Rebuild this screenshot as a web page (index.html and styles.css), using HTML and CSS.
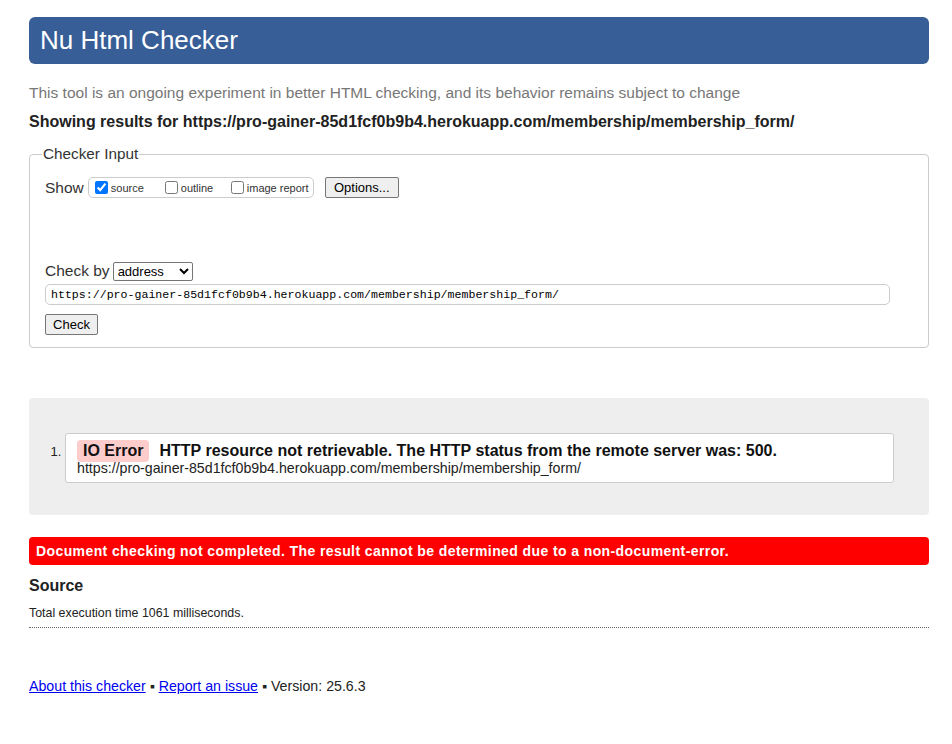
FILE: index.html
```html
<!DOCTYPE html>
<html lang="en">
<head>
<meta charset="utf-8">
<title>Nu Html Checker</title>
<link rel="stylesheet" href="styles.css">
</head>
<body>
<div class="page">
  <h1 class="title">Nu Html Checker</h1>
  <p class="intro">This tool is an ongoing experiment in better HTML checking, and its behavior remains subject to change</p>
  <p class="showing">Showing results for https://pro-gainer-85d1fcf0b9b4.herokuapp.com/membership/membership_form/</p>

  <fieldset class="input">
    <legend class="legend">Checker Input</legend>
    <div class="show-row">
      <span class="label">Show</span>
      <span class="opts">
        <label class="opt"><input type="checkbox" checked>source</label>
        <label class="opt"><input type="checkbox">outline</label>
        <label class="opt"><input type="checkbox">image report</label>
      </span>
      <button class="btn options">Options...</button>
    </div>
    <div class="checkby-row">
      <span class="label">Check by</span>
      <select class="select"><option>address</option></select>
    </div>
    <input class="url" type="text" value="https://pro-gainer-85d1fcf0b9b4.herokuapp.com/membership/membership_form/">
    <div class="check-row"><button class="btn check">Check</button></div>
  </fieldset>

  <div class="results">
    <ol class="list">
      <li class="item">
        <div class="msg-box">
          <p class="msg"><span class="badge">IO Error</span><span class="msg-text">HTTP resource not retrievable. The HTTP status from the remote server was: 500.</span></p>
          <p class="loc">https://pro-gainer-85d1fcf0b9b4.herokuapp.com/membership/membership_form/</p>
        </div>
      </li>
    </ol>
  </div>

  <p class="fatal">Document checking not completed. The result cannot be determined due to a non-document-error.</p>

  <h2 class="source">Source</h2>
  <p class="stats">Total execution time 1061 milliseconds.</p>

  <p class="footer"><a href="#">About this checker</a> &#9642; <a href="#">Report an issue</a> &#9642; Version: 25.6.3</p>
</div>
</body>
</html>
```
FILE: styles.css
```css
* { box-sizing: border-box; }
html, body { margin: 0; padding: 0; background: #fff; }
body {
  font-family: "Liberation Sans", Arial, sans-serif;
  color: #222;
}
.page {
  width: 900px;
  margin-left: 29px;
  padding-top: 17px;
}
.title {
  margin: 0;
  height: 47px;
  background: #375e97;
  color: #fff;
  border-radius: 6px;
  font-weight: normal;
  font-size: 26px;
  line-height: 47px;
  padding-left: 11px;
}
.intro {
  margin: 19px 0 0;
  font-size: 15.5px;
  line-height: 20px;
  color: #777;
}
.showing {
  margin: 9px 0 0;
  font-size: 16px;
  font-weight: bold;
  line-height: 20px;
  color: #222;
}
.input {
  margin: 13px 0 0;
  border: 1px solid #ccc;
  border-radius: 4px;
  padding: 8px 15px 12px 15px;
  min-width: 0;
}
.legend {
  font-size: 15.3px;
  padding: 0 1px;
  margin-left: -3px;
  color: #333;
}
.show-row {
  display: flex;
  align-items: center;
  height: 21px;
  margin-top: 6px;
}
.label {
  font-size: 15.5px;
  color: #333;
  margin-right: 4px;
  white-space: nowrap;
}
.opts {
  display: inline-flex;
  align-items: center;
  height: 21px;
  border: 1px solid #ccc;
  border-radius: 5px;
  padding: 0 0 0 6px;
  width: 226px;
}
.opt {
  display: inline-flex;
  align-items: center;
  font-size: 11px;
  color: #333;
  white-space: nowrap;
}
.opt input {
  margin: 0 3px 0 0;
  width: 13px;
  height: 13px;
  accent-color: #0075ff;
}
.opt:nth-child(1) { width: 70px; }
.opt:nth-child(2) { width: 66px; }
.btn {
  font-family: "Liberation Sans", Arial, sans-serif;
  font-size: 13px;
  background: #efefef;
  border: 1px solid #767676;
  border-radius: 2px;
  color: #000;
  height: 21px;
  padding: 0 7px;
}
.options { margin-left: 11px; width: 74px; }
.checkby-row {
  display: flex;
  align-items: center;
  margin-top: 63px;
  height: 20px;
}
.checkby-row .label { margin-right: 3px; }
.select {
  font-family: "Liberation Sans", Arial, sans-serif;
  font-size: 13px;
  width: 80px;
  height: 19px;
  border: 1px solid #767676;
  border-radius: 2px;
  background: #fff;
  color: #000;
}
.url {
  display: block;
  margin-top: 3px;
  width: 845px;
  height: 21px;
  border: 1px solid #ccc;
  border-radius: 5px;
  font-family: "Liberation Mono", monospace;
  font-size: 11.6px;
  padding: 0 5px;
  color: #000;
}
.check-row { margin-top: 9px; }
.check { width: 53px; height: 21px; }
.results {
  margin-top: 50px;
  background: #eee;
  border-radius: 4px;
  padding: 35px 35px 33px 0;
  height: 117px;
}
.list {
  margin: 0;
  padding-left: 36px;
  font-size: 13px;
  color: #222;
}
.msg-box {
  background: #fff;
  border: 1px solid #ccc;
  border-radius: 3px;
  padding: 6px 12px 7px 11px;
  width: 829px;
}
.msg {
  margin: 0;
  font-size: 16px;
  font-weight: bold;
  line-height: 20px;
  color: #111;
}
.badge {
  display: inline-block;
  background: #fcc;
  border-radius: 4px;
  padding: 0 6px;
  margin-right: 10px;
  line-height: 22px;
  font-weight: bold;
}
.loc {
  margin: -1px 0 0;
  font-size: 14.2px;
  line-height: 14px;
  color: #222;
}
.fatal {
  margin: 22px 0 0;
  background: #f00;
  color: #fff;
  font-weight: bold;
  font-size: 14px;
  letter-spacing: 0.4px;
  border-radius: 4px;
  height: 28px;
  line-height: 28px;
  padding-left: 7px;
}
.source {
  margin: 11px 0 0;
  font-size: 16px;
  font-weight: bold;
  line-height: 20px;
  color: #222;
}
.stats {
  margin: 9px 0 0;
  font-size: 12.4px;
  line-height: 16px;
  color: #222;
  padding-bottom: 6px;
  border-bottom: 1px dotted #666;
}
.footer {
  margin: 50px 0 0;
  font-size: 14.2px;
  color: #222;
}
.footer a { color: #00e; }
```
